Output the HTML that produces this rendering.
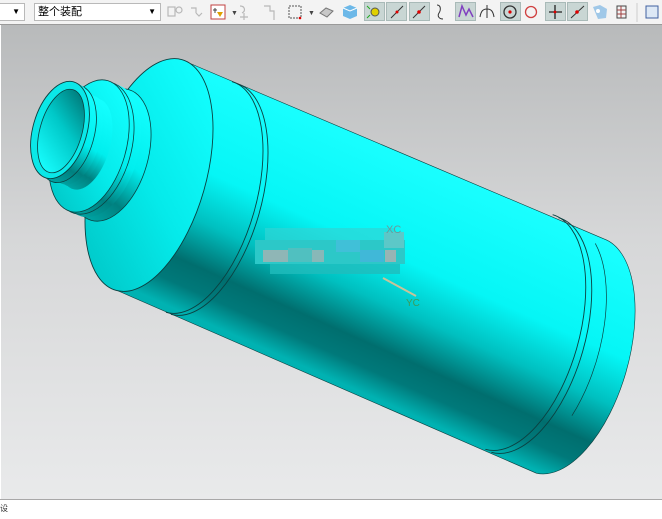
<!DOCTYPE html>
<html><head><meta charset="utf-8"><style>
html,body{margin:0;padding:0;width:662px;height:518px;overflow:hidden;background:#fff;font-family:"Liberation Sans","Noto Sans CJK SC",sans-serif}
#tb{position:absolute;left:0;top:0;width:662px;height:24px;background:#f3f3f3;border-bottom:1px solid #9a9a9a}
.dd{position:absolute;top:3px;height:16px;background:#fff;border:1px solid #b9b9b9;font-size:11px;line-height:16px}
.dd .a{position:absolute;right:4px;top:0;font-size:8px}
.hl{position:absolute;top:2px;width:21px;height:19px;background:#c9d6d4;border:1px solid #a9bab8;box-sizing:border-box}
#vp{position:absolute;left:1px;top:25px;width:661px;height:474px;background:linear-gradient(#b8babb,#d6d7d8 45%,#e9eaeb)}
#sb{position:absolute;left:0;top:499px;width:662px;height:19px;border-top:1px solid #a8a8a8;background:#fff}
</style></head><body>
<div id="tb">
 <div class="dd" style="left:-1px;width:24px"><span class="a">▼</span></div>
 <div class="dd" style="left:34px;width:125px"><span style="padding-left:3px">整个装配</span><span class="a">▼</span></div>
 <div class="hl" style="left:364px"></div><div class="hl" style="left:386px"></div><div class="hl" style="left:409px"></div>
 <div class="hl" style="left:455px"></div><div class="hl" style="left:500px"></div><div class="hl" style="left:545px"></div><div class="hl" style="left:567px"></div>
 <svg width="662" height="24" style="position:absolute;left:0;top:0">
  <g fill="none" stroke="#b8b8b8" stroke-width="1.2">
   <rect x="168" y="7" width="7" height="9"/><circle cx="179" cy="10" r="3"/>
   <path d="M191 8l5 0 0 5M196 13l3 3 3-3"/>
   <path d="M240 6c5 0 6 5 2 7M244 13v7M240 17h8"/>
   <path d="M264 6h6v5h4v9"/>
  </g>
  <rect x="211" y="5" width="14" height="14" fill="#fff" stroke="#c04040"/>
  <path d="M217 12l6 0-3 5z" fill="#e0a000"/><path d="M215 8v5M213 10h4" stroke="#444"/>
  <text x="231" y="15" font-size="7" fill="#444">▼</text>
  <rect x="289" y="6" width="12" height="12" fill="none" stroke="#555" stroke-dasharray="2 1"/><circle cx="300" cy="18" r="1.3" fill="#d00"/>
  <text x="308" y="15" font-size="7" fill="#444">▼</text>
  <path d="M320 13l6-5 7 3-6 6z" fill="#c8c8c8" stroke="#777"/>
  <path d="M343 8l7-3 7 3v8l-7 3-7-3z" fill="#6cb8e8"/><path d="M343 8l7 3 7-3" stroke="#fff" fill="none"/>
  <circle cx="375" cy="12" r="4" fill="#e0d000" stroke="#555"/><path d="M367 6l3 3M367 18l3-3" stroke="#2a2"/>
  <path d="M391 18l12-12" stroke="#333"/><circle cx="397" cy="12" r="1.5" fill="#d00"/>
  <path d="M413 18l12-12" stroke="#333"/><circle cx="419" cy="12" r="1.8" fill="#d00"/>
  <path d="M437 5c4 0 4 5 2 8s0 6 4 6" stroke="#333" fill="none"/>
  <path d="M459 17l3-11 4 9 3-6 4 8" stroke="#8040c0" fill="none" stroke-width="1.5"/>
  <path d="M480 17c1-6 3-8 7-8s6 2 7 8M487 5v13" stroke="#333" fill="none"/>
  <circle cx="510" cy="12" r="6" fill="none" stroke="#333" stroke-width="1.3"/><circle cx="510" cy="12" r="1.6" fill="#d00"/>
  <circle cx="531" cy="12" r="5.5" fill="none" stroke="#d04040" stroke-width="1.3"/>
  <path d="M549 12h13M555 5v14" stroke="#222" stroke-width="1.3"/><circle cx="555" cy="12" r="1.4" fill="#d00"/>
  <path d="M571 18l13-12" stroke="#333"/><circle cx="577" cy="12" r="1.8" fill="#d00"/>
  <path d="M593 7l7-2 7 4-1 9-8 1z" fill="#a0c8e8"/><circle cx="598" cy="11" r="2" fill="#fff"/>
  <rect x="617" y="6" width="9" height="12" fill="none" stroke="#444"/><path d="M617 10h9M617 14h9M621 6v12" stroke="#a04040"/>
  <path d="M637 3v19" stroke="#ccc"/>
  <rect x="646" y="6" width="12" height="12" fill="#dde8f5" stroke="#4060a0"/>
 </svg>
</div>
<div id="vp"></div>
<svg width="662" height="518" style="position:absolute;left:0;top:0">
 <defs>
  <linearGradient id="bg" gradientUnits="userSpaceOnUse" x1="380" y1="140" x2="283" y2="357">
   <stop offset="0" stop-color="#1affff"/><stop offset="0.42" stop-color="#05f6f6"/>
   <stop offset="0.62" stop-color="#00c0c0"/><stop offset="0.8" stop-color="#006e6e"/>
   <stop offset="0.9" stop-color="#00797a"/><stop offset="1" stop-color="#00b2b2"/>
  </linearGradient>
  <linearGradient id="fc" x1="0.7" y1="0" x2="0.2" y2="1">
   <stop offset="0" stop-color="#12ffff"/><stop offset="0.5" stop-color="#05eaea"/><stop offset="1" stop-color="#00c6c6"/>
  </linearGradient>
  <linearGradient id="nb" x1="0.6" y1="0" x2="0.35" y2="1">
   <stop offset="0" stop-color="#14ffff"/><stop offset="0.45" stop-color="#00eeee"/>
   <stop offset="0.75" stop-color="#00807f"/><stop offset="1" stop-color="#00a8a8"/>
  </linearGradient>
  <linearGradient id="hole" x1="0.7" y1="0" x2="0.3" y2="1">
   <stop offset="0" stop-color="#007a7a"/><stop offset="0.45" stop-color="#00c8c8"/><stop offset="1" stop-color="#18ffff"/>
  </linearGradient>
 </defs>
 <!-- body -->
 <path d="M182,60 L603.7,238.8 A60 122 16 0 1 536.3,473.2 L116,290 Z" fill="url(#bg)" stroke="#0b4040" stroke-width="0.6"/>
 <g transform="translate(525,335) rotate(16)" fill="none" stroke="#0b4040" stroke-width="0.9"><path d="M0,-122 A60 122 0 0 1 0 122"/></g>
 <g transform="translate(519,332) rotate(16)" fill="none" stroke="#0b4040" stroke-width="0.9"><path d="M0,-122 A60 122 0 0 1 0 122"/></g>
 <g transform="translate(550,347) rotate(16)" fill="none" stroke="#0b4040" stroke-width="0.7"><path d="M15,-112 A60 122 0 0 1 40 60"/></g>
 <!-- left grooves -->
 <g transform="translate(204,199) rotate(16)" fill="none" stroke="#0b4040" stroke-width="0.9"><path d="M0,-120 A57 120 0 0 1 0 120"/></g>
 <g transform="translate(199,197) rotate(16)" fill="none" stroke="#0b4040" stroke-width="0.9"><path d="M0,-120 A57 120 0 0 1 0 120"/></g>
 <!-- left face -->
 <ellipse cx="0" cy="0" rx="57" ry="120" transform="translate(149,175) rotate(16)" fill="url(#fc)" stroke="#0b4040" stroke-width="0.9"/>
 <!-- neck -->
 <g fill="url(#nb)" stroke="#0b4040" stroke-width="0.8">
  <ellipse rx="38" ry="68" transform="translate(110,155) rotate(16)"/>
  <ellipse rx="38" ry="68" transform="translate(100,151) rotate(16)" stroke="none"/>
  <ellipse rx="38" ry="68" transform="translate(96,149) rotate(16)" stroke="none"/>
  <ellipse rx="38" ry="68" transform="translate(93,148) rotate(16)"/>
 </g>
 <ellipse rx="37" ry="68" transform="translate(89,146) rotate(16)" fill="url(#fc)" stroke="#0b4040" stroke-width="0.8"/>
 <g fill="url(#nb)">
  <ellipse rx="24" ry="47" transform="translate(86,144) rotate(16)"/>
  <ellipse rx="24" ry="47" transform="translate(81,141) rotate(16)"/>
  <ellipse rx="24" ry="47" transform="translate(76,139) rotate(16)"/>
  <ellipse rx="24" ry="47" transform="translate(71,136) rotate(16)"/>
  <ellipse rx="27" ry="50" transform="translate(67,134) rotate(16)" stroke="#0b4040" stroke-width="0.8"/>
  <ellipse rx="27" ry="50" transform="translate(64,132) rotate(16)"/>
 </g>
 <ellipse rx="27" ry="50" transform="translate(60,130) rotate(16)" fill="#0ae8e8" stroke="#0b4040" stroke-width="0.9"/>
 <ellipse rx="21" ry="43" transform="translate(61,131) rotate(16)" fill="url(#hole)" stroke="#0b4040" stroke-width="0.8"/>
 <!-- mosaic -->
 <g>
  <rect x="265" y="228" width="130" height="12" fill="#30d4d4" opacity="0.7"/>
  <rect x="255" y="240" width="150" height="24" fill="#2cc8c8"/>
  <rect x="263" y="250" width="25" height="12" fill="#8fb6b6"/>
  <rect x="288" y="248" width="24" height="14" fill="#50c0c0"/>
  <rect x="312" y="250" width="12" height="12" fill="#88b8b8"/>
  <rect x="336" y="240" width="24" height="12" fill="#40c0d8"/>
  <rect x="360" y="250" width="24" height="12" fill="#40b8d8"/>
  <rect x="385" y="250" width="11" height="12" fill="#98b4b4"/>
  <rect x="384" y="232" width="20" height="16" fill="#5cc8c8"/>
  <rect x="270" y="264" width="130" height="10" fill="#20bcbc" opacity="0.8"/>
 </g>
 <text x="386" y="233" font-size="11" fill="#6a9a9a">XC</text>
 <path d="M383 278L416 296" stroke="#c9c398" stroke-width="2"/>
 <text x="406" y="306" font-size="10" fill="#3c9c5a">YC</text>
</svg>
<div id="sb"><span style="position:absolute;left:0;top:3px;font-size:8px;color:#333">设</span></div>
</body></html>
